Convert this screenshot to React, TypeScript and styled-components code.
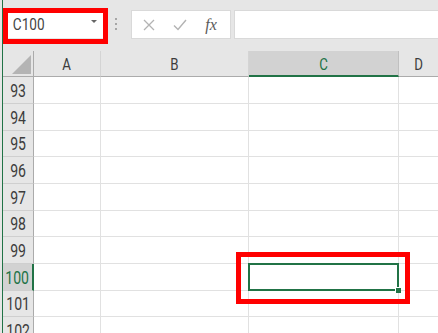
import React from "react";
import styled, { createGlobalStyle } from "styled-components";

const GlobalStyle = createGlobalStyle`
  html, body {
    margin: 0;
    padding: 0;
    background: #e6e6e6;
    overflow: hidden;
  }
`;

const GREEN = "#217346";

const Window = styled.div`
  width: 438px;
  height: 333px;
  overflow: hidden;
  display: flex;
  flex-direction: column;
  margin-left: 2px;
  border-left: 1px solid ${GREEN};
  background: #e6e6e6;
  font-family: "Roboto", "Liberation Sans", sans-serif;
  color: #3c3c3c;
`;

// the sheet font is a narrow face; squeeze Roboto to match
const Narrow = styled.span<{ $scale?: number }>`
  display: inline-block;
  transform: scaleX(${({ $scale }) => $scale ?? 0.78});
`;

const FormulaBar = styled.div`
  height: 51px;
  flex: none;
  display: flex;
  align-items: flex-start;
  padding-top: 10px;
  box-sizing: border-box;
`;

const NameBox = styled.div`
  position: relative;
  margin-left: 5px;
  width: 97px;
  height: 28px;
  background: #fff;
  display: flex;
  align-items: center;
  justify-content: space-between;
  padding: 0 8px 0 2px;
  box-sizing: border-box;
  font-size: 16px;
  color: #444;
`;

const Arrow = styled.span`
  width: 0;
  height: 0;
  border-left: 3px solid transparent;
  border-right: 3px solid transparent;
  border-top: 3px solid #666;
  margin-top: -6px;
`;

const Annotation = styled.div<{ $top: number; $left: number; $w: number; $h: number }>`
  position: absolute;
  top: ${({ $top }) => $top}px;
  left: ${({ $left }) => $left}px;
  width: ${({ $w }) => $w}px;
  height: ${({ $h }) => $h}px;
  border: 5px solid #ff0000;
  box-sizing: border-box;
  pointer-events: none;
  z-index: 3;
`;

const Grip = styled.div`
  width: 12px;
  margin: 0 9px 0 5px;
  height: 28px;
  display: flex;
  flex-direction: column;
  align-items: center;
  justify-content: center;
  gap: 3px;

  span {
    width: 2px;
    height: 2px;
    background: #a6a6a6;
  }
`;

const FuncButtons = styled.div`
  width: 100px;
  height: 29px;
  background: #fff;
  border: 1px solid #d9d9d9;
  box-sizing: border-box;
  display: flex;
  align-items: center;
  justify-content: space-around;
  padding: 0 4px 0 2px;
`;

const FuncIcon = styled.span`
  color: #b3b3b3;
  display: flex;
  align-items: center;
`;

const Fx = styled.span`
  font-family: "Liberation Serif", serif;
  font-style: italic;
  font-size: 16px;
  color: #5a5a5a;
`;

const FormulaInput = styled.div`
  flex: 1;
  height: 29px;
  margin-left: 3px;
  background: #fff;
  border: 1px solid #d9d9d9;
  border-right: none;
  box-sizing: border-box;
`;

const Sheet = styled.div`
  display: grid;
  grid-template-columns: 31px 67px 148px 150px 40px;
  flex: none;
  background: #fff;
`;

const HeadCell = styled.div<{ $active?: boolean }>`
  height: 26px;
  box-sizing: border-box;
  background: ${({ $active }) => ($active ? "#d2d2d2" : "#e6e6e6")};
  border-right: 1px solid ${({ $active }) => ($active ? "#c0c0c0" : "#d4d4d4")};
  border-bottom: ${({ $active }) => ($active ? `2px solid ${GREEN}` : "1px solid #ababab")};
  color: ${({ $active }) => ($active ? GREEN : "#3c3c3c")};
  font-size: 17px;
  display: flex;
  align-items: center;
  justify-content: center;
  padding-top: ${({ $active }) => ($active ? "1px" : "0")};
`;

const Corner = styled.div`
  height: 26px;
  box-sizing: border-box;
  background: #e6e6e6;
  border-right: 1px solid #ababab;
  border-bottom: 1px solid #ababab;
  display: flex;
  align-items: flex-end;
  justify-content: flex-end;
  padding: 0 2px 2px 0;

  &::after {
    content: "";
    width: 0;
    height: 0;
    border-left: 19px solid transparent;
    border-bottom: 19px solid #b4b4b4;
  }
`;

const RowHead = styled.div<{ $h: number; $active?: boolean }>`
  height: ${({ $h }) => $h}px;
  box-sizing: border-box;
  background: ${({ $active }) => ($active ? "#d2d2d2" : "#e6e6e6")};
  border-bottom: 1px solid #cfcfcf;
  border-right: ${({ $active }) => ($active ? `2px solid ${GREEN}` : "1px solid #ababab")};
  color: ${({ $active }) => ($active ? GREEN : "#3c3c3c")};
  font-size: 18px;
  display: flex;
  align-items: center;
  justify-content: center;
`;

const Cell = styled.div<{ $h: number }>`
  position: relative;
  height: ${({ $h }) => $h}px;
  box-sizing: border-box;
  border-right: 1px solid #e1e1e1;
  border-bottom: 1px solid #e1e1e1;
`;

const Selection = styled.div`
  position: absolute;
  top: -1px;
  left: -1px;
  right: -1px;
  bottom: -1px;
  border: 2px solid ${GREEN};
  z-index: 2;

  &::after {
    content: "";
    position: absolute;
    right: -4px;
    bottom: -4px;
    width: 5px;
    height: 5px;
    background: ${GREEN};
    border-left: 1px solid #fff;
    border-top: 1px solid #fff;
  }
`;

const columns = ["A", "B", "C", "D"];
const rows = [93, 94, 95, 96, 97, 98, 99, 100, 101, 102];
const heights = [27, 27, 26, 27, 27, 26, 27, 27, 26, 27];

export default function App() {
  return (
    <>
      <GlobalStyle />
      <Window>
        <FormulaBar>
          <NameBox>
            <Narrow $scale={0.85}>C100</Narrow>
            <Arrow />
            <Annotation $top={-2} $left={-5} $w={105} $h={36} />
          </NameBox>
          <Grip>
            <span />
            <span />
            <span />
          </Grip>
          <FuncButtons>
            <FuncIcon>
              <svg width="12" height="12" viewBox="0 0 12 12">
                <path d="M1 1 L11 11 M11 1 L1 11" stroke="currentColor" strokeWidth="1.3" fill="none" />
              </svg>
            </FuncIcon>
            <FuncIcon>
              <svg width="14" height="12" viewBox="0 0 14 12">
                <path d="M1 6.5 L5 10.5 L13 1" stroke="currentColor" strokeWidth="1.4" fill="none" />
              </svg>
            </FuncIcon>
            <Fx>fx</Fx>
          </FuncButtons>
          <FormulaInput />
        </FormulaBar>
        <Sheet>
          <Corner />
          {columns.map((c) => (
            <HeadCell key={c} $active={c === "C"}>
              <Narrow>{c}</Narrow>
            </HeadCell>
          ))}
          {rows.map((r, i) => (
            <React.Fragment key={r}>
              <RowHead $h={heights[i]} $active={r === 100}>
                <Narrow>{r}</Narrow>
              </RowHead>
              {columns.map((c) => (
                <Cell key={c} $h={heights[i]}>
                  {r === 100 && c === "C" && (
                    <>
                      <Selection />
                      <Annotation $top={-12} $left={-13} $w={174} $h={52} />
                    </>
                  )}
                </Cell>
              ))}
            </React.Fragment>
          ))}
        </Sheet>
      </Window>
    </>
  );
}
